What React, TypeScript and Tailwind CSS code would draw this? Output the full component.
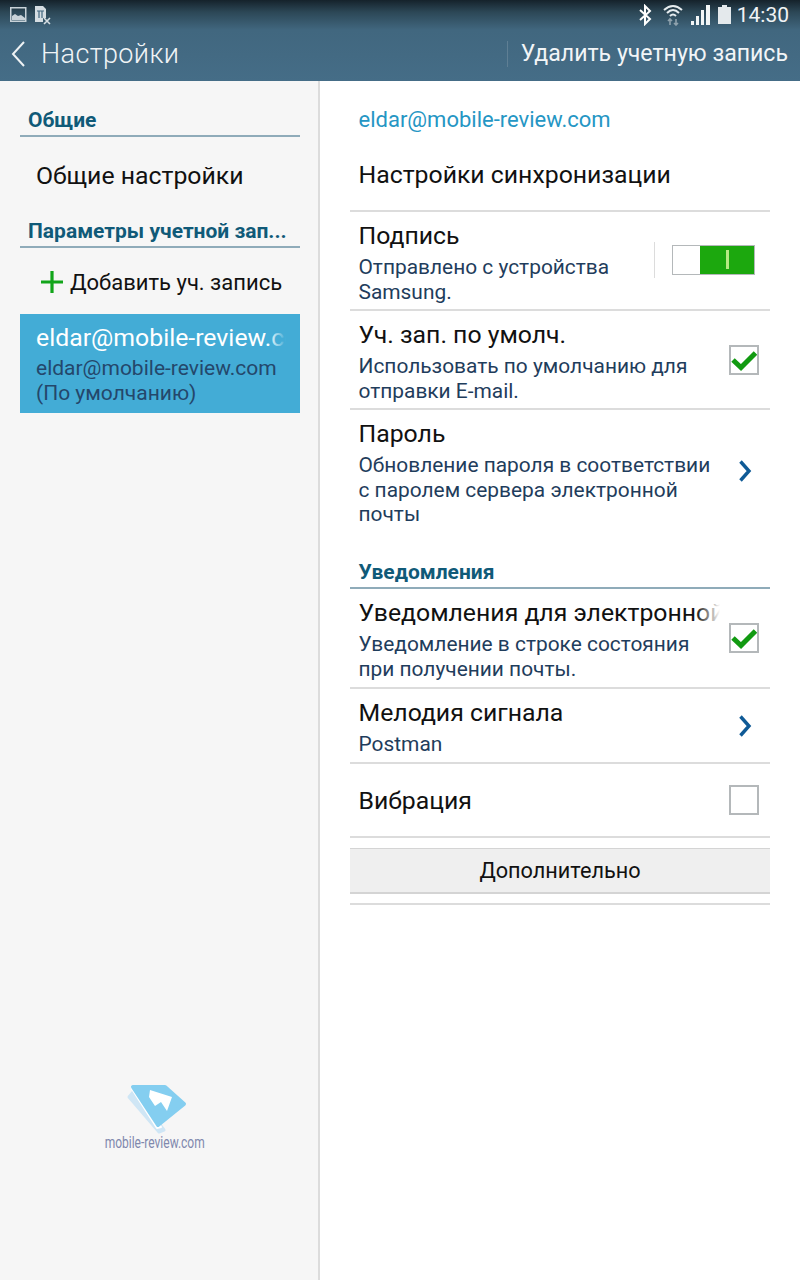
const font = "font-['Roboto',sans-serif]";

function Check({ on }: { on: boolean }) {
  return (
    <div className="mr-[11px] flex h-[30px] w-[30px] shrink-0 items-center justify-center border-2 border-[#b4b8ba] bg-white">
      {on && (
        <svg width="26" height="22" viewBox="0 0 26 22">
          <path d="M2 11 L10 18.5 L24.5 4" fill="none" stroke="#119a11" strokeWidth="5" />
        </svg>
      )}
    </div>
  );
}

function Chevron() {
  return (
    <svg width="14" height="24" viewBox="0 0 14 24" className="mr-[18px] shrink-0">
      <path d="M2.5 2.5 L11 12 L2.5 21.5" fill="none" stroke="#0f5a96" strokeWidth="3.4" />
    </svg>
  );
}

function Toggle() {
  return (
    <div className="-mt-[2px] mr-[15px] flex items-center">
      <div className="mr-[17px] h-[36px] w-px bg-[#dcdcdc]" />
      <div className="flex h-[30px] w-[83px] border border-[#b4b8ba] bg-white">
        <div className="w-[27px]" />
        <div className="flex flex-1 items-center justify-center bg-[#1ca80e]">
          <div className="h-[19px] w-[3px] bg-[#b6ea82]" />
        </div>
      </div>
    </div>
  );
}

function Row({
  title,
  sub,
  height,
  pt,
  right,
  fade,
  last,
}: {
  title: string;
  sub?: string;
  height: string;
  pt: string;
  right?: React.ReactNode;
  fade?: boolean;
  last?: boolean;
}) {
  return (
    <div className={`flex items-center justify-between ${last ? "" : "border-b-2 border-[#dcdcdc]"} ${height}`}>
      <div className={`min-w-0 flex-1 self-start pl-[8.5px] ${pt}`}>
        <div className={`relative overflow-hidden whitespace-nowrap text-[24.8px] leading-[30px] text-[#111] ${fade ? "w-[361px]" : ""}`}>
          {title}
          {fade && <div className="absolute inset-y-0 right-0 w-[24px] bg-gradient-to-r from-transparent to-white" />}
        </div>
        {sub && <div className="mt-[4px] whitespace-pre-line text-[20.9px] leading-[24.7px] text-[#1f3d5c]">{sub}</div>}
      </div>
      {right}
    </div>
  );
}

function SideHeading({ children }: { children: React.ReactNode }) {
  return (
    <div className="border-b-2 border-[#8fabb9] px-2 text-[21px] font-bold leading-[30px] text-[#105a78]">{children}</div>
  );
}

function StatusBar() {
  return (
    <div className="flex h-[29px] items-center justify-between pl-[10px] pr-[11px]">
      <div className="flex items-center gap-[7px]">
        <svg width="17" height="17" viewBox="0 0 17 17">
          <rect x="0.75" y="1.75" width="15" height="13.5" fill="none" stroke="#c8d2d8" strokeWidth="1.5" />
          <path d="M2 14 V10 L5 8 L8 10 L11 9 L15 12 V14 Z" fill="#c8d2d8" />
        </svg>
        <svg width="17" height="20" viewBox="0 0 17 20">
          <path d="M1 1 H9 L12 4 V13 H9 V17 H1 Z" fill="#d5dde2" />
          <path d="M3 6 H10 M5 6 V13 M8 6 V13" stroke="#41677f" strokeWidth="1.2" />
          <path d="M10 13 L16 19 M16 13 L10 19" stroke="#d5dde2" strokeWidth="1.6" />
        </svg>
      </div>
      <div className="flex items-center">
        <svg width="14" height="22" viewBox="0 0 14 22" className="mr-[11px]">
          <path d="M2 6 L12 15 L7 20 V2 L12 7 L2 16" fill="none" stroke="#fff" strokeWidth="2" />
        </svg>
        <svg width="20" height="22" viewBox="0 0 20 22" className="mr-[7px]">
          <path d="M1 6 Q10 -2 19 6 M4 9 Q10 3 16 9 M7 12 Q10 9 13 12" fill="none" stroke="#e6ecef" strokeWidth="2" />
          <path d="M7 21 V15 M5 17 L7 15 L9 17 M13 15 V21 M11 19 L13 21 L15 19" fill="none" stroke="#8fa2ad" strokeWidth="1.6" />
        </svg>
        <svg width="21" height="21" viewBox="0 0 21 21" className="mr-[7px]">
          <path d="M1 21 H4 V17 H1 Z M6 21 H9 V12 H6 Z M11 21 H14 V6 H11 Z M16 21 H20 V1 H16 Z" fill="#f2f5f6" />
        </svg>
        <svg width="13" height="19" viewBox="0 0 13 19" className="mr-[6px]">
          <path d="M4 0 H9 V2 H13 V19 H0 V2 H4 Z" fill="#e4e9ec" />
        </svg>
        <span className="text-[21px] leading-[24px] text-[#f0f3f5]">14:30</span>
      </div>
    </div>
  );
}

export default function App() {
  return (
    <div className={`flex h-[1280px] w-[800px] flex-col overflow-hidden bg-white ${font}`}>
      <header className="h-[81px] shrink-0 bg-[linear-gradient(#15222b_0px,#2c4756_12px,#41677f_30px,#456d87_81px)] text-white">
        <StatusBar />
        <div className="flex h-[50px] items-center">
          <svg width="16" height="28" viewBox="0 0 16 28" className="ml-[10px] mr-[15px]">
            <path d="M14 2 L3 14 L14 26" fill="none" stroke="#eef2f4" strokeWidth="2" />
          </svg>
          <span className="text-[27px] font-light tracking-[0.4px] text-[#f0f4f6]">Настройки</span>
          <div className="ml-auto mr-[12px] flex items-center">
            <div className="mr-[13px] h-[26px] w-px bg-[#5f7f94]" />
            <span className="text-[23.1px] text-[#f2f5f7]">Удалить учетную запись</span>
          </div>
        </div>
      </header>

      <div className="flex flex-1">
        <aside className="relative w-[320px] shrink-0 border-r-2 border-[#dcdcdc] bg-[#f6f6f6] pl-[20px] pr-[18px] pt-[24px]">
          <SideHeading>Общие</SideHeading>
          <div className="flex h-[79px] items-center pb-[2px] pl-[16px] text-[24.8px] text-[#111]">Общие настройки</div>
          <SideHeading>Параметры учетной зап...</SideHeading>
          <div className="flex h-[66px] items-center pl-[20px] pt-[2px] text-[22px] text-[#111]">
            <svg width="24" height="24" viewBox="0 0 24 24" className="mr-[6px]">
              <path d="M12 1 V23 M1 12 H23" stroke="#12a51a" strokeWidth="3.2" />
            </svg>
            Добавить уч. запись
          </div>
          <div className="h-[99px] bg-[#43acd6] pl-[16px] pt-[8px]">
            <div className="relative w-[250px] overflow-hidden whitespace-nowrap text-[24.8px] leading-[32px] text-white">
              eldar@mobile-review.com
              <div className="absolute inset-y-0 right-0 w-[18px] bg-gradient-to-r from-transparent to-[#43acd6]" />
            </div>
            <div className="mt-[2px] text-[21px] leading-[25px] text-[#24476b]">
              eldar@mobile-review.com
              <br />
              (По умолчанию)
            </div>
          </div>
          <div className="absolute left-[104px] top-[1002px] flex w-[101px] flex-col items-center">
            <svg width="64" height="52" viewBox="0 0 64 52" className="ml-[7px]">
              <path d="M3 14 L33 49 L38 47 L8 8 Z" fill="#cfe6f5" strokeLinejoin="round" stroke="#cfe6f5" strokeWidth="3" />
              <path d="M6 6 L31 45 L35 44 L8 6 Z" fill="#fff" stroke="#fff" strokeWidth="2" strokeLinejoin="round" />
              <path d="M7 4 L39 4 L58 21 L32 42 Z" fill="#84cef0" stroke="#84cef0" strokeWidth="4" strokeLinejoin="round" />
              <path d="M24 7 L46 14 L41 28 L35 19 L29 23 L23 14 Z" fill="#fff" />
            </svg>
            <span className="-mt-[2px] scale-x-[0.75] whitespace-nowrap text-[16px] leading-[20px] text-[#8088ad]">mobile-review.com</span>
          </div>
        </aside>

        <main className="flex-1 px-[30px] pt-[24px]">
          <div className="pl-[8.5px] text-[22px] leading-[30px] text-[#2596c4]">eldar@mobile-review.com</div>
          <div className="flex h-[77px] items-center border-b-2 border-[#dcdcdc] pl-[8.5px] pt-[5px] text-[24.8px] text-[#111]">
            Настройки синхронизации
          </div>
          <Row height="h-[99px]" pt="pt-[9px]" title="Подпись" sub={"Отправлено с устройства\nSamsung."} right={<Toggle />} />
          <Row height="h-[99px]" pt="pt-[9px]" title="Уч. зап. по умолч." sub={"Использовать по умолчанию для\nотправки E-mail."} right={<Check on />} />
          <Row
            last
            height="h-[122px]"
            pt="pt-[9px]"
            title="Пароль"
            sub={"Обновление пароля в соответствии\nс паролем сервера электронной\nпочты"}
            right={<Chevron />}
          />
          <div className="mt-[25px] border-b-2 border-[#8fabb9] pl-[8.5px] text-[21px] font-bold leading-[30px] text-[#105a78]">Уведомления</div>
          <Row height="h-[100px]" pt="pt-[9px]" title="Уведомления для электронной" sub={"Уведомление в строке состояния\nпри получении почты."} right={<Check on />} fade />
          <Row height="h-[75px]" pt="pt-[9px]" title="Мелодия сигнала" sub="Postman" right={<Chevron />} />
          <Row height="h-[74px]" pt="pt-[22px]" title="Вибрация" right={<Check on={false} />} />
          <div className="mt-[10px] flex h-[46px] items-center justify-center border-b-2 border-t border-[#d4d4d4] bg-[#efefef] pt-[1px] text-[21.7px] text-[#111]">Дополнительно</div>
          <div className="mt-[9px] h-[2px] bg-[#dcdcdc]" />
        </main>
      </div>
    </div>
  );
}
